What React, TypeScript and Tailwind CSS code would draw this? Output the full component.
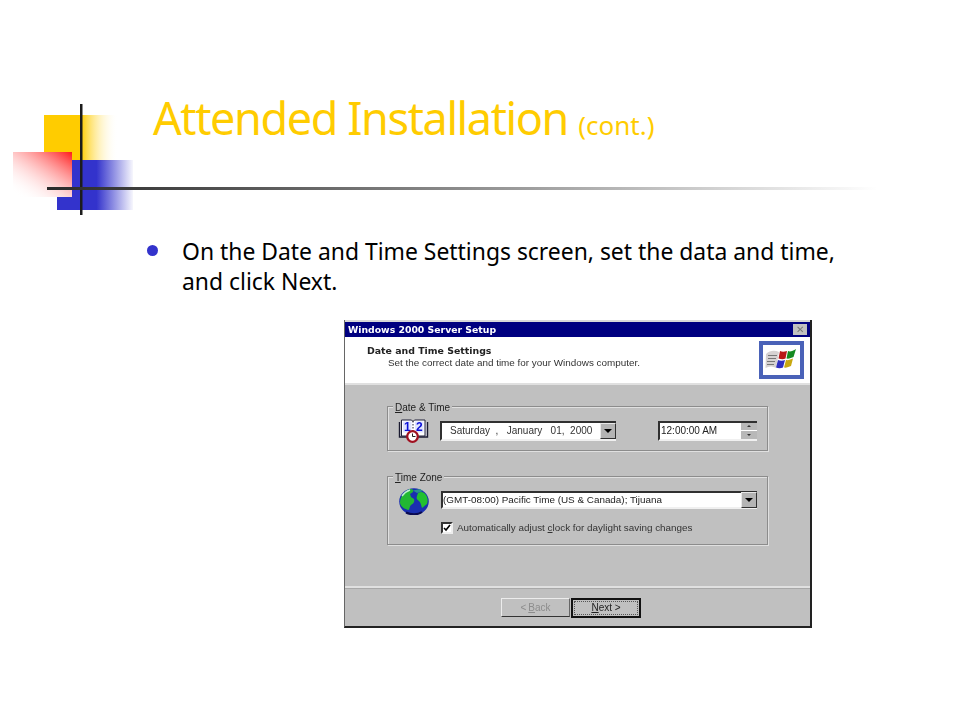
import React from "react";

function SlideMark() {
  return (
    <svg className="absolute left-0 top-[90px]" width="140" height="130" viewBox="0 90 140 130">
      <defs>
        <linearGradient id="yellowFade" x1="0" x2="1" y1="0" y2="0">
          <stop offset="0" stopColor="#ffcc00" />
          <stop offset="0.5" stopColor="#ffcc00" />
          <stop offset="1" stopColor="#ffffff" stopOpacity="0" />
        </linearGradient>
        <linearGradient id="blueFade" x1="0" x2="1" y1="0" y2="0">
          <stop offset="0" stopColor="#3333cc" />
          <stop offset="0.52" stopColor="#3333cc" />
          <stop offset="1" stopColor="#3333cc" stopOpacity="0.04" />
        </linearGradient>
        <linearGradient id="redFade" x1="1" x2="0.1" y1="0" y2="1">
          <stop offset="0" stopColor="#ff1a1a" />
          <stop offset="1" stopColor="#ffffff" stopOpacity="0" />
        </linearGradient>
      </defs>
      <rect x="44" y="115" width="74" height="46" fill="url(#yellowFade)" />
      <rect x="57" y="160" width="76" height="50" fill="url(#blueFade)" />
      <rect x="13" y="152" width="59" height="45" fill="#ffffff" />
      <rect x="13" y="152" width="59" height="45" fill="url(#redFade)" />
      <rect x="80" y="104" width="2.5" height="111" fill="#1c1c1c" />
    </svg>
  );
}

function CalendarIcon() {
  return (
    <svg width="31" height="25" viewBox="0 0 31 25">
      {/* book cover and pages */}
      <path d="M1.500 4v15h28V4" fill="#d8d8e0" stroke="#1a1a30" strokeWidth="1.400" />
      <path d="M3.500 2h10l1.500 1.500L16.500 2h10.500v16H3.500z" fill="#ffffff" stroke="#20203a" strokeWidth="1" />
      <rect x="5" y="3.500" width="8.500" height="11" fill="#dfe4ff" />
      <rect x="17" y="3.500" width="8.500" height="11" fill="#dfe4ff" />
      <text x="6" y="13" fontSize="12" fontWeight="700" fill="#0c10d8" fontFamily="Liberation Sans, sans-serif">1</text>
      <text x="18" y="13" fontSize="12" fontWeight="700" fill="#0c10d8" fontFamily="Liberation Sans, sans-serif">2</text>
      <path d="M15 3v11" stroke="#20203a" strokeWidth="1" strokeDasharray="1.500 1.500" />
      {/* clock on top */}
      <circle cx="14.500" cy="18.500" r="5.300" fill="#ffffff" stroke="#a01020" strokeWidth="2.300" />
      <path d="M14.500 15.500v3h3" fill="none" stroke="#222" strokeWidth="1" />
    </svg>
  );
}

function GlobeIcon() {
  return (
    <svg width="30" height="27" viewBox="0 0 30 27">
      <ellipse cx="15" cy="13.500" rx="14.800" ry="13.300" fill="#1a2fb0" />
      <path d="M1 15C1 9 5 3 11 1c3 0 4 1 3 3l-3 2 1 3 3 2c1 3-1 5-3 6-2 2-1 5-3 5-3-1-7-3-8-7z" fill="#22b832" />
      <path d="M19 5c3-2 6-1 8 2 2 3 2 6 1 9-2 1-3 3-5 4-1-3-1-5-3-7-2-1-3-3-2-5z" fill="#22c030" />
      <path d="M14 2.500l7-1.500 3 2-6 2z" fill="#2a8f90" />
      <path d="M3 8c2-3 5-5 8-6" fill="none" stroke="#c0f0d0" strokeWidth="1.400" />
      <path d="M7 24.500c5 2.500 12 2.500 16-.5" fill="none" stroke="#0a0a50" strokeWidth="2" />
    </svg>
  );
}

function WindowsBadge() {
  return (
    <div className="flex h-[38px] w-[45px] items-center justify-center border-[4px] border-[#4a62b8] bg-white">
      <svg width="34" height="25" viewBox="0 0 34 25">
        <path d="M1 6c4-4 9-4 13-2l-3 16c-4-2-7-2-10.500 0z" fill="#d6d2d2" />
        <path d="M3 7.500h9M3 10.500h8M2 13.500h8M2 16.500h7" stroke="#777" strokeWidth="1.200" />
        <path d="M15 3c2 1 4 1 7 0l-1.500 7.500c-2 1-4 1-7 0z" fill="#b81818" />
        <path d="M23 3c2 1 5 0 8-2l-2.500 8c-2 1-5 2-7 1.500z" fill="#148a20" />
        <path d="M13 12c2 1 5 1 7 0L18 19.500c-2 1-5 1-7 0z" fill="#3030c0" />
        <path d="M21 12c2 .5 5-.5 7-1.500l-2 7.500c-2 1-5 2-7 1.500z" fill="#c8a810" />
      </svg>
    </div>
  );
}

function ArrowButton() {
  return (
    <div className="flex h-[16px] w-[16px] shrink-0 items-center justify-center border border-t-[#e8e8e8] border-l-[#e8e8e8] border-r-[#303030] border-b-[#303030] bg-[#b4b4b4]">
      <div className="h-0 w-0 border-x-[4px] border-t-[4px] border-x-transparent border-t-black" />
    </div>
  );
}

function Sunken({ className, children }: { className: string; children: React.ReactNode }) {
  return (
    <div className={`flex items-center justify-between border-t-2 border-b-2 border-l-2 border-t-[#303030] border-l-[#303030] border-b-[#f0f0f0] bg-white ${className}`}>
      {children}
    </div>
  );
}

function GroupBox({ label, className, children }: { label: React.ReactNode; className: string; children: React.ReactNode }) {
  return (
    <div className={`relative mx-[42px] border border-[#8c8c8c] shadow-[inset_1px_1px_0_#e0e0e0,1px_1px_0_#e0e0e0] ${className}`}>
      <span className="absolute left-[5px] top-[-5px] bg-[#c0c0c0] px-[2px] text-[10px] leading-[12px] text-[#222]">{label}</span>
      {children}
    </div>
  );
}

function SetupDialog() {
  return (
    <div className="ml-[344px] mt-[23px] flex h-[308px] w-[468px] flex-col border-r-2 border-b-2 border-l border-r-[#222] border-b-[#222] border-l-[#666] bg-[#c0c0c0] font-['Liberation_Sans',sans-serif] blur-[0.35px]">
      <div className="border-t-2 border-t-[#d8d8d8] bg-[#c0c0c0]">
        <div className="flex h-[15px] items-center justify-between bg-[#000080] pl-[3px] pr-[3px]">
          <span className="font-['DejaVu_Sans',sans-serif] text-[9.3px] font-bold leading-none text-white">Windows 2000 Server Setup</span>
          <div className="flex h-[11px] w-[14px] items-center justify-center bg-[#c0c0c0] text-[10px] leading-none text-[#777]">✕</div>
        </div>
      </div>
      <div className="flex h-[48px] items-center justify-between border-b-2 border-b-[#e0e0e0] bg-white pl-[22px] pr-[6px]">
        <div className="mb-[8px] flex flex-col">
          <span className="font-['DejaVu_Sans',sans-serif] text-[9.4px] font-bold leading-[13px] text-[#222]">Date and Time Settings</span>
          <span className="pl-[21px] text-[9.9px] leading-[11px] text-[#333]">Set the correct date and time for your Windows computer.</span>
        </div>
        <WindowsBadge />
      </div>

      <div className="flex flex-1 flex-col">
        <GroupBox label={<><u>D</u>ate &amp; Time</>} className="mt-[21px] h-[45px]">
          <div className="flex h-full items-center pl-[10px] pt-[4px]">
            <CalendarIcon />
            <Sunken className="ml-[11px] h-[20px] w-[176px]">
              <span className="whitespace-pre pl-[8px] text-[10px] text-[#333]">Saturday  ,   January   01,  2000</span>
              <ArrowButton />
            </Sunken>
            <Sunken className="ml-[42px] h-[20px] w-[99px]">
              <span className="pl-[1px] text-[10px] text-[#222]">12:00:00 AM</span>
              <div className="flex h-[16px] w-[16px] flex-col gap-px">
                <div className="flex flex-1 items-center justify-center bg-[#b8b8b8]">
                  <div className="h-0 w-0 border-x-[2px] border-b-[2px] border-x-transparent border-b-[#333]" />
                </div>
                <div className="flex flex-1 items-center justify-center bg-[#b8b8b8]">
                  <div className="h-0 w-0 border-x-[2px] border-t-[2px] border-x-transparent border-t-[#333]" />
                </div>
              </div>
            </Sunken>
          </div>
        </GroupBox>

        <GroupBox label={<><u>T</u>ime Zone</>} className="mt-[25px] h-[69px]">
          <div className="flex pl-[11px] pt-[11px]">
            <GlobeIcon />
            <div className="ml-[12px] flex flex-col pt-[3px]">
              <Sunken className="h-[18px] w-[316px]">
                <span className="text-[9.9px] text-[#222]">(GMT-08:00) Pacific Time (US &amp; Canada); Tijuana</span>
                <ArrowButton />
              </Sunken>
              <div className="mt-[12px] flex items-center gap-[4px]">
                <div className="flex h-[12px] w-[12px] items-center justify-center border-2 border-t-[#333] border-l-[#333] border-r-[#eee] border-b-[#eee] bg-white">
                  <svg width="8" height="8" viewBox="0 0 8 8">
                    <path d="M1 4l2 2 4-5" fill="none" stroke="#000" strokeWidth="1.600" />
                  </svg>
                </div>
                <span className="text-[9.9px] text-[#333]">Automatically adjust <u>c</u>lock for daylight saving changes</span>
              </div>
            </div>
          </div>
        </GroupBox>

        <div className="mt-[41px] border-t-2 border-t-[#e0e0e0] border-b border-b-[#a8a8a8]" />

        <div className="flex items-start pl-[156px] pt-[9px]">
          <div className="flex h-[19px] w-[69px] items-center justify-center border border-t-[#ececec] border-l-[#ececec] border-r-[#666] border-b-[#333] text-[10px] text-[#8c8c8c]">
            &lt; <u className="ml-[2px]">B</u>ack
          </div>
          <div className="ml-px flex h-[20px] w-[70px] items-center justify-center border-2 border-[#111] pb-[2px] outline-1 -outline-offset-4 outline-dotted outline-[#555] text-[10px] text-[#222]">
            <u>N</u>ext &gt;
          </div>
        </div>
      </div>
    </div>
  );
}

export default function App() {
  return (
    <div className="relative h-[720px] w-[960px] overflow-hidden bg-white font-['DejaVu_Sans',sans-serif]">
      <SlideMark />
      <div className="pl-[153px] pt-[90px]">
        <h1 className="whitespace-nowrap font-['Noto_Sans',sans-serif] text-[45px] leading-[55px] tracking-[-1.4px] text-[#ffcc00]">
          Attended Installation <span className="text-[26px] tracking-normal">(cont.)</span>
        </h1>
      </div>
      <div className="relative ml-[47px] mt-[34px] h-[3px] w-[830px] bg-gradient-to-r from-[#2a2a2a] to-white" />
      <div className="mt-[47px] flex pl-[147px]">
        <div className="mt-[8px] h-[11px] w-[11px] rounded-full bg-[#3333cc]" />
        <p className="ml-[24px] w-[665px] font-['Noto_Sans',sans-serif] text-[22.9px] leading-[30px] text-black">
          On the Date and Time Settings screen, set the data and time, and click Next.
        </p>
      </div>
      <SetupDialog />
    </div>
  );
}
